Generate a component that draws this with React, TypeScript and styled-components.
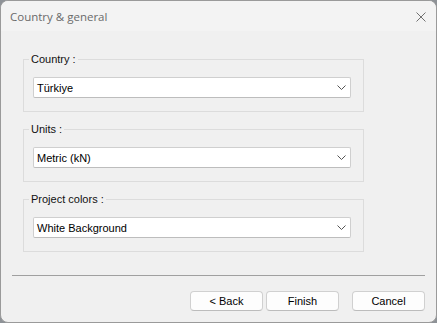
import React from "react";
import styled, { createGlobalStyle } from "styled-components";

const Global = createGlobalStyle`
  html, body { margin: 0; padding: 0; background: #8e9297; }
  body { font-family: "Liberation Sans", Arial, sans-serif; font-size: 11px; }
  * { box-sizing: border-box; }
`;

const Window = styled.div`
  width: 437px;
  height: 323px;
  border: 1px solid #9a9a9a;
  border-radius: 8px;
  overflow: hidden;
  background: #f0f0f0;
  display: flex;
  flex-direction: column;
`;

const TitleBar = styled.div`
  height: 30px;
  background: #f3f3f3;
  display: flex;
  align-items: center;
  justify-content: space-between;
  padding: 0 10px 0 9px;
  flex-shrink: 0;
`;

const Title = styled.span`
  font-family: "Segoe UI", "Open Sans", "Noto Sans", sans-serif;
  font-size: 11.5px;
  color: #6a6a6a;
`;

const CloseButton = styled.button`
  width: 10px;
  height: 10px;
  padding: 0;
  border: 0;
  background: none;
  display: flex;
  align-items: center;
  justify-content: center;
  margin-top: 2px;
`;

const Content = styled.div`
  flex: 1;
  padding: 21px 0 0 22px;
  display: flex;
  flex-direction: column;
  gap: 10px;
`;

const Group = styled.fieldset`
  margin: 0;
  width: 341px;
  border: 1px solid #dcdcdc;
  border-radius: 0;
  padding: 11px 12px 13px 9px;
  min-width: 0;
`;

const Legend = styled.legend`
  padding: 0 2px;
  margin-left: -4px;
  font-size: 11px;
  line-height: 14px;
  color: #101010;
`;

const Combo = styled.div`
  height: 21px;
  background: #ffffff;
  border: 1px solid #cfcfcf;
  border-bottom-color: #bdbdbd;
  border-radius: 2px;
  display: flex;
  align-items: center;
  justify-content: space-between;
  padding: 0 4px 0 3px;
  color: #000;
  font-size: 11px;
`;

const ComboText = styled.span`
  line-height: 14px;
`;

const Footer = styled.div`
  padding: 0 11px 11px 11px;
  display: flex;
  flex-direction: column;
`;

const Separator = styled.div`
  height: 1px;
  background: #a0a0a0;
  margin-bottom: 15px;
`;

const Buttons = styled.div`
  display: flex;
  justify-content: flex-end;
  align-items: center;
`;

const Button = styled.button<{ $gapLeft?: number }>`
  width: 73px;
  height: 20px;
  margin-left: ${(p) => p.$gapLeft ?? 0}px;
  background: #fdfdfd;
  border: 1px solid #d0d0d0;
  border-bottom-color: #bcbcbc;
  border-radius: 4px;
  font-family: inherit;
  font-size: 11px;
  color: #000;
  padding: 0;
  line-height: 14px;
`;

const Chevron = () => (
  <svg width="9" height="5" viewBox="0 0 9 5" fill="none">
    <path d="M0.5 0.5 L4.5 4.5 L8.5 0.5" stroke="#555" strokeWidth="1" />
  </svg>
);

const fields = [
  { label: "Country :", value: "Türkiye" },
  { label: "Units :", value: "Metric (kN)" },
  { label: "Project colors :", value: "White Background" },
];

export default function App() {
  return (
    <>
      <Global />
      <Window>
        <TitleBar>
          <Title>Country &amp; general</Title>
          <CloseButton aria-label="Close">
            <svg width="10" height="10" viewBox="0 0 10 10">
              <path d="M0.5 0.5 L9.5 9.5 M9.5 0.5 L0.5 9.5" stroke="#707070" strokeWidth="1" />
            </svg>
          </CloseButton>
        </TitleBar>
        <Content>
          {fields.map((f) => (
            <Group key={f.label}>
              <Legend>{f.label}</Legend>
              <Combo>
                <ComboText>{f.value}</ComboText>
                <Chevron />
              </Combo>
            </Group>
          ))}
        </Content>
        <Footer>
          <Separator />
          <Buttons>
            <Button>&lt; Back</Button>
            <Button $gapLeft={3}>Finish</Button>
            <Button $gapLeft={13}>Cancel</Button>
          </Buttons>
        </Footer>
      </Window>
    </>
  );
}
